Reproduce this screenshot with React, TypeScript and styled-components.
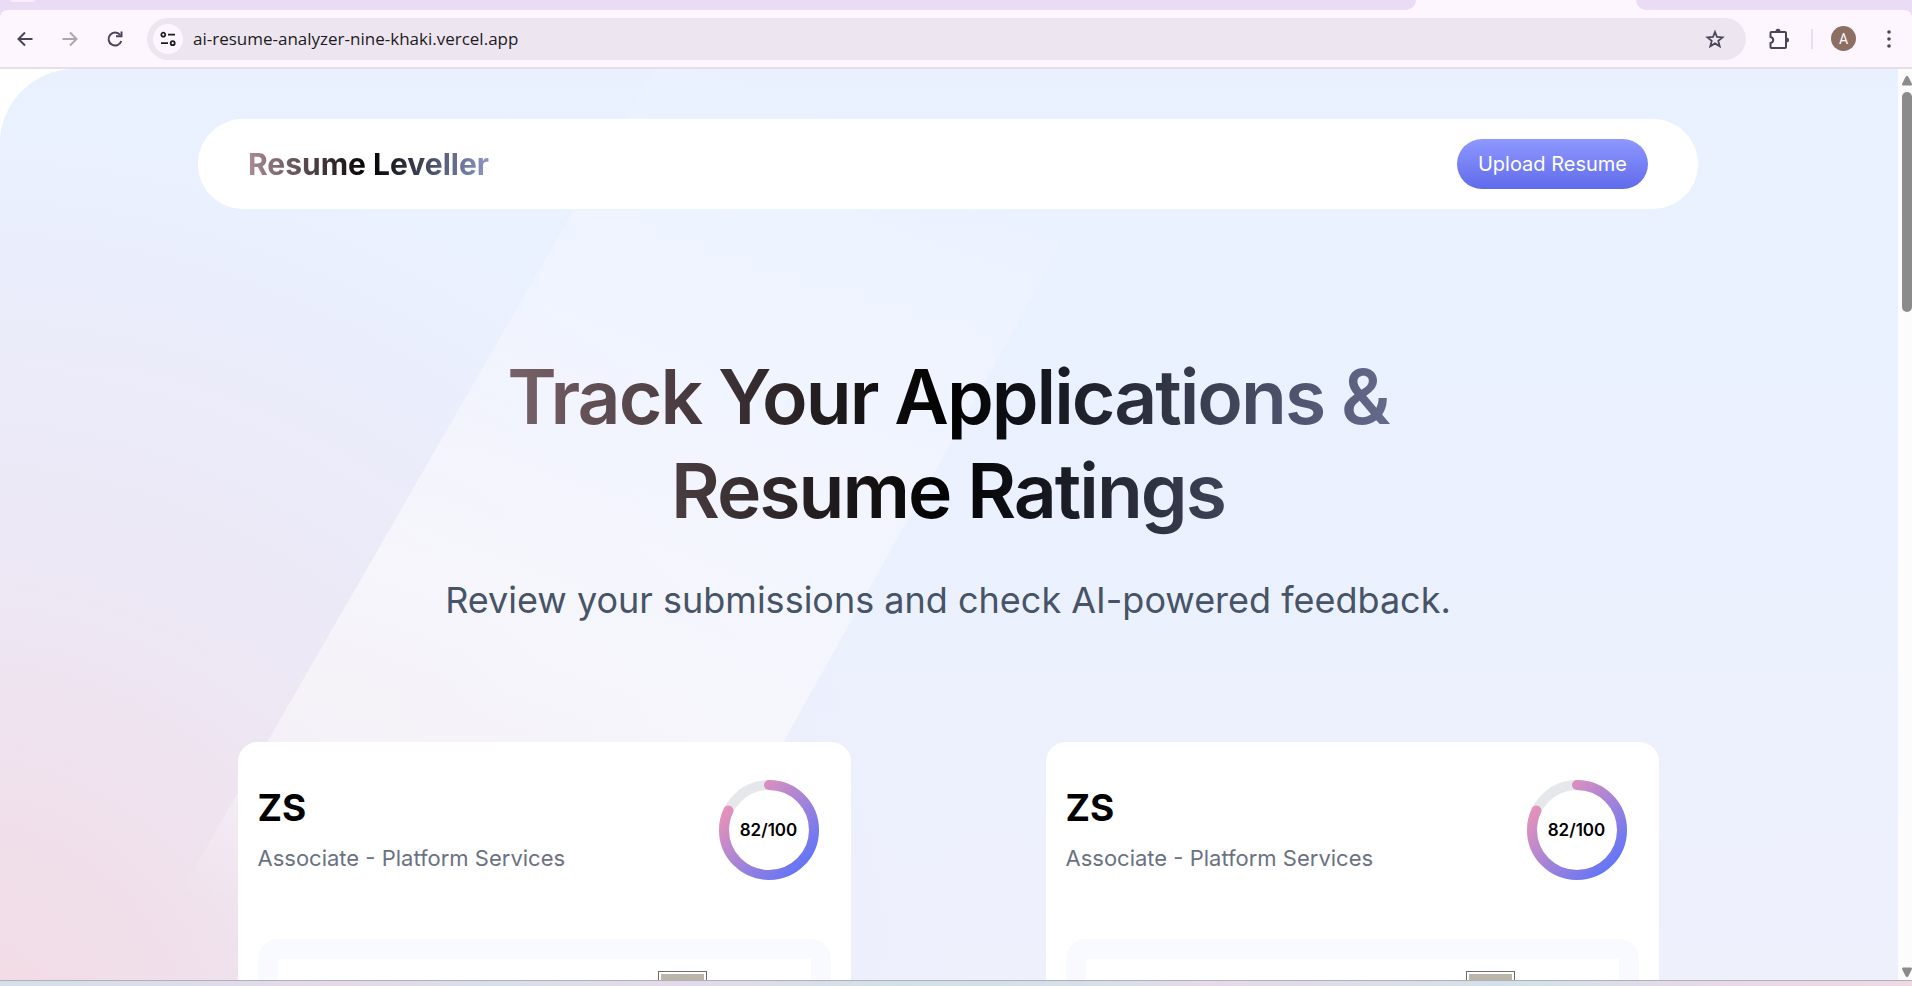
import React from "react";
import styled, { createGlobalStyle } from "styled-components";

const Global = createGlobalStyle`
  * { box-sizing: border-box; margin: 0; padding: 0; }
  html, body, #root { height: 100%; }
  body { font-family: Inter, "Open Sans", sans-serif; overflow: hidden; background: #fff; }
  button { font: inherit; color: inherit; border: 0; background: none; cursor: pointer; }
  a { color: inherit; text-decoration: none; }
`;

const Shell = styled.div`
  height: 100vh;
  display: flex;
  flex-direction: column;
  background: #eadcf5;
`;

const TabStrip = styled.div`
  display: flex;
  height: 10px;
  flex: none;
  background: #fef6ff;
`;

const TabRun = styled.div<{ $grow?: boolean }>`
  background: #eadcf5;
  flex: ${(p) => (p.$grow ? "1" : "0 0 276px")};
  border-radius: ${(p) => (p.$grow ? "0 0 14px 0" : "0 0 0 14px")};
  padding-left: 10px;
`;

const TabSearch = styled.div`
  width: 25px;
  height: 2px;
  border-radius: 0 0 8px 8px;
  background: #f7edfd;
`;

const TabGap = styled.div`
  flex: 0 0 220px;
`;

const Toolbar = styled.div`
  flex: none;
  height: 59px;
  background: #fef6ff;
  border-bottom: 2px solid #e7dfe8;
  border-radius: 8px 8px 0 0;
  display: flex;
  align-items: center;
  padding: 0 9px 0 10px;
  gap: 18px;
`;

const NavButtons = styled.div`
  display: flex;
  gap: 16px;
`;

const IconButton = styled.button<{ $faded?: boolean }>`
  width: 29px;
  height: 28px;
  flex: none;
  display: grid;
  place-items: center;
  color: ${(p) => (p.$faded ? "#ada5b0" : "#4a4458")};
`;

const AddressBar = styled.div`
  flex: 1;
  height: 42px;
  border-radius: 21px;
  background: #ede6f0;
  display: flex;
  align-items: center;
  padding: 0 17px 0 6px;
  gap: 10px;
`;

const SiteInfo = styled.button`
  width: 30px;
  height: 30px;
  flex: none;
  border-radius: 50%;
  background: #fef6ff;
  display: grid;
  place-items: center;
  color: #1d1b20;
`;

const Address = styled.input`
  flex: 1;
  min-width: 0;
  border: 0;
  outline: 0;
  background: none;
  font: 17px "Open Sans", "Noto Sans", sans-serif;
  color: #1d1b20;
`;

const Divider = styled.span`
  width: 2px;
  height: 20px;
  background: #eadcf8;
`;

const Avatar = styled.button`
  && {
    width: 25px;
    height: 25px;
    border-radius: 50%;
    background: #8d6e63;
    color: #fff;
    font-family: Roboto, sans-serif;
    font-size: 14px;
  }
`;

const Viewport = styled.div`
  flex: 1;
  min-height: 0;
  display: flex;
  background: #fff;
`;

const Page = styled.main`
  position: relative;
  flex: 1;
  min-width: 0;
  overflow: hidden;
  border-radius: 75px 0 0 0;
  background: #ebf0fd;
`;

const Backdrop = styled.svg`
  position: absolute;
  inset: 0;
  width: 100%;
  height: 100%;
`;

const Content = styled.div`
  position: relative;
  padding: 50px 2px 0 0;
`;

const Navbar = styled.nav`
  max-width: 1500px;
  height: 90px;
  margin: 0 auto;
  padding: 0 50px;
  border-radius: 45px;
  background: #fff;
  display: flex;
  align-items: center;
  justify-content: space-between;
`;

const Brand = styled.a`
  font-size: 30px;
  font-weight: 700;
  line-height: 40px;
  background: linear-gradient(to right, #ab8c95, #000, #8e97c5);
  background-clip: text;
  color: transparent;
`;

const Upload = styled.a`
  height: 50px;
  padding: 0 21px;
  border-radius: 25px;
  display: flex;
  align-items: center;
  color: #fff;
  font-size: 20px;
  background: linear-gradient(to bottom, #8e98ff, #606beb);
`;

const Hero = styled.header`
  max-width: 1250px;
  margin: 0 auto;
  padding-top: 141px;
  display: flex;
  flex-direction: column;
  gap: 37px;
  text-align: center;
`;

const Title = styled.h1`
  font-size: 75px;
  font-weight: 600;
  line-height: 94px;
  letter-spacing: -2px;
  background: linear-gradient(to right, #ab8c95, #000, #8e97c5);
  background-clip: text;
  color: transparent;
`;

const Subtitle = styled.h2`
  font-size: 36px;
  font-weight: 400;
  line-height: 50px;
  color: #475467;
`;

const Cards = styled.section`
  display: flex;
  justify-content: center;
  gap: 195px;
  padding-top: 117px;
`;

const Card = styled.a`
  width: 613px;
  height: 700px;
  flex: none;
  padding: 20px;
  border-radius: 20px;
  background: #fff;
  display: flex;
  flex-direction: column;
`;

const CardHead = styled.div`
  height: 177px;
  display: flex;
  justify-content: space-between;
  padding: 18px 12px 0 0;
`;

const CardText = styled.div`
  display: flex;
  flex-direction: column;
  gap: 10px;
  padding-top: 8px;
`;

const Company = styled.h2`
  font-size: 37px;
  line-height: 40px;
  font-weight: 700;
  color: #000;
`;

const Role = styled.h3`
  font-size: 22px;
  line-height: 40px;
  font-weight: 400;
  color: #6a7282;
`;

const Gauge = styled.div`
  width: 100px;
  height: 100px;
  display: grid;
  place-items: center;

  > * { grid-area: 1 / 1; }
`;

const Score = styled.span`
  font-size: 17px;
  font-weight: 600;
  color: #000;
`;

const Preview = styled.div`
  flex: 1;
  padding: 20px;
  border-radius: 20px;
  background: #f9faff;
`;

const Sheet = styled.div`
  height: 100%;
  background: #fff;
  display: flex;
  justify-content: flex-end;
  padding: 12px 104px 0 0;
`;

const Photo = styled.div`
  width: 49px;
  height: 60px;
  border: 1px solid #6c6c6c;
  padding: 2px;
  background: #bcb6aa content-box;
`;

const ScrollTrack = styled.div`
  width: 14px;
  flex: none;
  background: #fcfcfc;
  display: flex;
  flex-direction: column;
  padding: 7px 0 3px 4px;
  gap: 6px;
`;

const Thumb = styled.div`
  height: 220px;
  border-radius: 5px;
  background: #8b8b8b;
`;

const Spacer = styled.div`
  flex: 1;
`;

const Taskbar = styled.footer`
  flex: none;
  height: 6px;
  border-top: 1px solid #b0b0b8;
  background: linear-gradient(to right, #d5e0ea, #e5d9e9 18%, #d8dfea 26%, #e3dae9 35%, #d2e1e8 47%, #d7dfe8 58%, #e6daeb 63%, #d2e1e8 80%, #e9d9e9 90%, #efd9e3);
`;

const resumes = [
  { id: "a", company: "ZS", role: "Associate - Platform Services", score: 82 },
  { id: "b", company: "ZS", role: "Associate - Platform Services", score: 82 },
];

function ScoreGauge({ id, score }: { id: string; score: number }) {
  const length = 2 * Math.PI * 45;
  return (
    <Gauge>
      <svg width="100" height="100" viewBox="0 0 100 100">
        <defs>
          <linearGradient id={`ring-${id}`} x1="1" y1="0" x2="0" y2="1">
            <stop offset="0" stopColor="#FF97AD" />
            <stop offset="1" stopColor="#5171FF" />
          </linearGradient>
        </defs>
        <g transform="rotate(-90 50 50)" fill="none" strokeWidth="10">
          <circle cx="50" cy="50" r="45" stroke="#e5e7eb" />
          <circle
            cx="50"
            cy="50"
            r="45"
            stroke={`url(#ring-${id})`}
            strokeLinecap="round"
            strokeDasharray={length}
            strokeDashoffset={length * (1 - score / 100)}
          />
        </g>
      </svg>
      <Score>{score}/100</Score>
    </Gauge>
  );
}

export default function App() {
  return (
    <Shell>
      <Global />
      <TabStrip>
        <TabRun $grow>
          <TabSearch />
        </TabRun>
        <TabGap />
        <TabRun />
      </TabStrip>
      <Toolbar>
        <NavButtons>
          <IconButton aria-label="Back">
            <svg width="18" height="18" viewBox="0 0 18 18" fill="none" stroke="currentColor" strokeWidth="2">
              <path d="M16.500 9H3M9 2.500 2.500 9 9 15.500" />
            </svg>
          </IconButton>
          <IconButton aria-label="Forward" $faded>
            <svg width="18" height="18" viewBox="0 0 18 18" fill="none" stroke="currentColor" strokeWidth="2">
              <path d="M1.500 9H15M9 2.500 15.500 9 9 15.500" />
            </svg>
          </IconButton>
          <IconButton aria-label="Reload">
            <svg width="18" height="18" viewBox="0 0 18 18" fill="none" stroke="currentColor" strokeWidth="2">
              <path d="M15.300 11A6.500 6.500 0 1 1 14.200 5" />
              <path d="M15.500 1.500V7M10 6.300h6.500" />
            </svg>
          </IconButton>
        </NavButtons>
        <AddressBar>
          <SiteInfo aria-label="Site information">
            <svg width="18" height="18" viewBox="0 0 18 18" fill="none" stroke="currentColor" strokeWidth="1.800">
              <circle cx="4.300" cy="4.700" r="2" />
              <path d="M9 4.700h7M2 13.200h7" />
              <circle cx="13.700" cy="13.200" r="2" />
            </svg>
          </SiteInfo>
          <Address aria-label="Address" defaultValue="ai-resume-analyzer-nine-khaki.vercel.app" />
          <IconButton aria-label="Bookmark">
            <svg width="20" height="20" viewBox="0 0 20 20" fill="none" stroke="currentColor" strokeWidth="1.800">
              <path d="m10 3 2 5 5.500.4-4.200 3.500 1.400 5.400L10 14.400l-4.700 2.900 1.400-5.400L2.500 8.400 8 8z" />
            </svg>
          </IconButton>
        </AddressBar>
        <IconButton aria-label="Extensions">
          <svg width="22" height="22" viewBox="0 0 22 22" fill="none" stroke="currentColor" strokeWidth="2">
            <path d="M3.500 4H17q1 0 1 1v14q0 1-1 1H3.500q-1 0-1-1v-4q2.700-.6 2.700-3t-2.700-3V5q0-1 1-1z" />
            <path fill="currentColor" stroke="none" d="M7.500 3.500a2.500 2.700 0 0 1 5 0zM18.500 9.500a2.500 2.500 0 0 1 0 5z" />
          </svg>
        </IconButton>
        <Divider />
        <Avatar aria-label="Profile">A</Avatar>
        <IconButton aria-label="Menu">
          <svg width="4" height="20" viewBox="0 0 4 20" fill="currentColor">
            <circle cx="2" cy="3" r="1.800" />
            <circle cx="2" cy="10" r="1.800" />
            <circle cx="2" cy="17" r="1.800" />
          </svg>
        </IconButton>
      </Toolbar>
      <Viewport>
        <Page>
          <Backdrop viewBox="0 0 1898 912" preserveAspectRatio="none" aria-hidden="true">
            <defs>
              <linearGradient id="sky" x1="0" y1="0" x2="0" y2="1">
                <stop offset="0" stopColor="#e9f1ff" />
                <stop offset=".3" stopColor="#eaf1ff" />
                <stop offset="1" stopColor="#eef0fc" />
              </linearGradient>
              <radialGradient id="blush" gradientUnits="userSpaceOnUse" cx="0" cy="0" r="1" gradientTransform="translate(-60 980) scale(1050 980)">
                <stop offset="0" stopColor="#f3dae3" />
                <stop offset=".25" stopColor="#f0dfea" stopOpacity=".95" />
                <stop offset=".5" stopColor="#ede6f3" stopOpacity=".85" />
                <stop offset=".75" stopColor="#ebeaf8" stopOpacity=".7" />
                <stop offset="1" stopColor="#ebeffd" stopOpacity="0" />
              </radialGradient>
              <linearGradient id="beam" gradientUnits="userSpaceOnUse" x1="740" y1="0" x2="400" y2="912">
                <stop offset="0" stopColor="#fff" stopOpacity="0" />
                <stop offset=".25" stopColor="#fafaff" stopOpacity=".35" />
                <stop offset=".6" stopColor="#fafafd" stopOpacity=".7" />
                <stop offset=".75" stopColor="#f9f7fa" stopOpacity=".7" />
                <stop offset="1" stopColor="#fff" stopOpacity="0" />
              </linearGradient>
            </defs>
            <rect width="1898" height="912" fill="url(#sky)" />
            <rect width="1898" height="912" fill="url(#blush)" />
            <path d="M655 0h505L650 912H130z" fill="url(#beam)" />
          </Backdrop>
          <Content>
            <Navbar>
              <Brand href="#">Resume Leveller</Brand>
              <Upload href="#upload">Upload Resume</Upload>
            </Navbar>
            <Hero>
              <Title>
                Track Your Applications &amp;
                <br />
                Resume Ratings
              </Title>
              <Subtitle>Review your submissions and check AI-powered feedback.</Subtitle>
            </Hero>
            <Cards>
              {resumes.map((r) => (
                <Card key={r.id} href={`#resume-${r.id}`}>
                  <CardHead>
                    <CardText>
                      <Company>{r.company}</Company>
                      <Role>{r.role}</Role>
                    </CardText>
                    <ScoreGauge id={r.id} score={r.score} />
                  </CardHead>
                  <Preview>
                    <Sheet>
                      <Photo />
                    </Sheet>
                  </Preview>
                </Card>
              ))}
            </Cards>
          </Content>
        </Page>
        <ScrollTrack>
          <svg width="10" height="10" viewBox="0 0 10 10" fill="#8b8b8b">
            <path d="M5 0q1 0 1.500 1L10 8q0 1.500-1 1.500H1Q0 9.500 0 8l3.500-7Q4 0 5 0z" />
          </svg>
          <Thumb />
          <Spacer />
          <svg width="10" height="10" viewBox="0 0 10 10" fill="#8b8b8b">
            <path d="M5 10q1 0 1.500-1L10 2q0-1.500-1-1.500H1Q0 .5 0 2l3.500 7q.5 1 1.500 1z" />
          </svg>
        </ScrollTrack>
      </Viewport>
      <Taskbar />
    </Shell>
  );
}
